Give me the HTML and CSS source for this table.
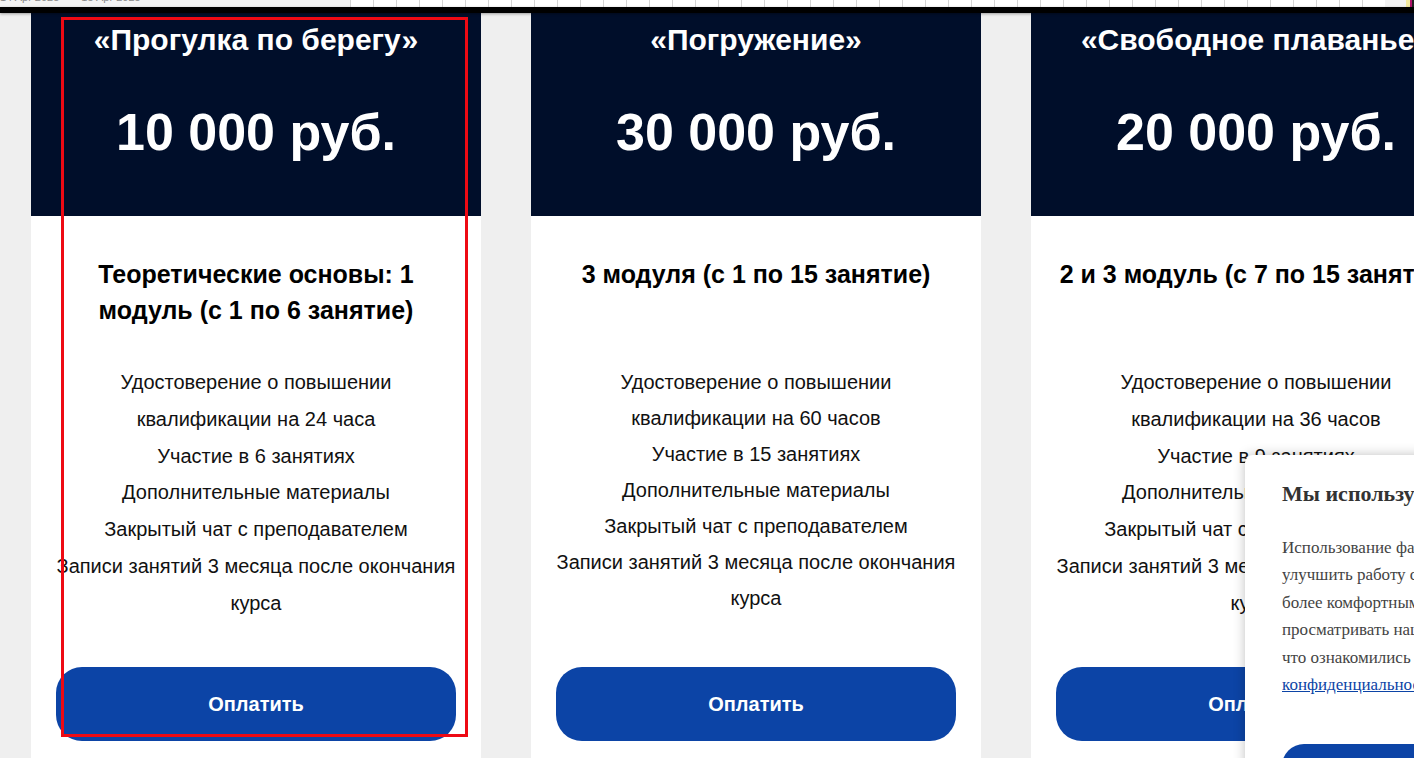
FILE: index.html
```html
<!DOCTYPE html>
<html lang="ru">
<head>
<meta charset="utf-8">
<title>Тарифы</title>
<link rel="stylesheet" href="styles.css">
</head>
<body>
<div class="topstrip">
  <div class="dates"><span>14 Apr 2025</span><span>15 Apr 2025</span></div>
  <div class="ruler">
    <i></i><i></i><i></i><i></i><i></i><i></i><i></i><i></i><i></i><i></i><i></i><i></i><i></i><i></i><i></i><i></i><i></i><i></i><i></i><i></i><i></i><i></i><i></i><i></i><i></i><i></i><i></i><i></i><i></i><i></i><i></i><i></i><i></i><i></i><i></i><i></i><i></i><i></i><i></i><i></i><i></i><i></i><i></i><i></i><i></i>
  </div>
  <div class="mark"></div>
</div>
<div class="blackbar"></div>

<main class="cards">
  <section class="card">
    <div class="card-head">
      <h2 class="title">«Прогулка по берегу»</h2>
      <div class="price">10 000 руб.</div>
    </div>
    <div class="card-body">
      <h3 class="sub">Теоретические основы: 1 модуль (с 1 по 6 занятие)</h3>
      <div class="features">
        <p>Удостоверение о повышении квалификации на 24 часа</p>
        <p>Участие в 6 занятиях</p>
        <p>Дополнительные материалы</p>
        <p>Закрытый чат с преподавателем</p>
        <p>Записи занятий 3 месяца после окончания курса</p>
      </div>
      <button class="btn">Оплатить</button>
    </div>
  </section>

  <section class="card">
    <div class="card-head">
      <h2 class="title">«Погружение»</h2>
      <div class="price">30 000 руб.</div>
    </div>
    <div class="card-body">
      <h3 class="sub">3 модуля (с 1 по 15 занятие)</h3>
      <div class="features tight">
        <p>Удостоверение о повышении квалификации на 60 часов</p>
        <p>Участие в 15 занятиях</p>
        <p>Дополнительные материалы</p>
        <p>Закрытый чат с преподавателем</p>
        <p>Записи занятий 3 месяца после окончания курса</p>
      </div>
      <button class="btn">Оплатить</button>
    </div>
  </section>

  <section class="card">
    <div class="card-head">
      <h2 class="title">«Свободное плаванье»</h2>
      <div class="price">20 000 руб.</div>
    </div>
    <div class="card-body">
      <h3 class="sub nowrap">2 и 3 модуль (с 7 по 15 занятие)</h3>
      <div class="features">
        <p>Удостоверение о повышении квалификации на 36 часов</p>
        <p>Участие в 9 занятиях</p>
        <p>Дополнительные материалы</p>
        <p>Закрытый чат с преподавателем</p>
        <p>Записи занятий 3 месяца после окончания курса</p>
      </div>
      <button class="btn">Оплатить</button>
    </div>
  </section>
</main>

<div class="annot"></div>

<aside class="cookie">
  <h4 class="cookie-title">Мы используем cookie</h4>
  <p class="cookie-text">Использование файлов cookie позволяет нам<br>улучшить работу сайта и сделать его<br>более комфортным. Продолжая<br>просматривать наш сайт, вы подтверждаете,<br>что ознакомились с политикой<br><a href="#">конфиденциальности</a></p>
  <button class="cookie-btn">Принять</button>
</aside>
</body>
</html>
```

FILE: styles.css
```css
* { box-sizing: border-box; }

html, body {
  margin: 0;
  padding: 0;
  overflow: hidden;
  height: 758px;
}

body {
  background: #efefef;
  font-family: "Liberation Sans", Arial, sans-serif;
  color: #111;
  position: relative;
}

.topstrip {
  height: 7px;
  background: #f3f3f3;
  display: flex;
  overflow: hidden;
}

.dates {
  width: 350px;
  display: flex;
  gap: 22px;
  font-size: 11px;
  line-height: 11px;
  color: #888;
  margin-top: -8px;
  padding-left: 0;
}

.ruler {
  flex: 1;
  display: flex;
}

.ruler i {
  display: block;
  width: 23px;
  flex: none;
  height: 7px;
  background: #fff;
  border-left: 1px solid #d4d4d4;
}

.mark {
  width: 8px;
  background: linear-gradient(90deg, #f3eaa0 0 4px, #b0126a 4px 6px, #222 6px);
}

.blackbar {
  height: 6px;
  background: #000;
  box-shadow: 0 1px 3px rgba(0,0,0,0.35);
  position: relative;
  z-index: 2;
}

.cards {
  display: flex;
  gap: 50px;
  padding-left: 31px;
  width: max-content;
}

.card {
  width: 450px;
  flex: none;
  background: #fff;
}

.card-head {
  height: 203px;
  background: #000e2a;
  color: #fff;
  text-align: center;
  padding-top: 9px;
}

.title {
  margin: 0;
  font-size: 30px;
  line-height: 36px;
  font-weight: 700;
  white-space: nowrap;
}

.price {
  margin-top: 43px;
  font-size: 52px;
  line-height: 62px;
  font-weight: 700;
}

.card-body {
  padding: 40px 25px 40px;
  text-align: center;
}

.sub {
  margin: 0 0 36px;
  height: 72px;
  font-size: 25px;
  line-height: 36px;
  font-weight: 700;
  color: #000;
}

.sub.nowrap {
  white-space: nowrap;
}

.features {
  height: 303px;
  font-size: 20px;
  line-height: 36.8px;
  color: #111;
}

.features.tight {
  line-height: 36px;
}

.features p {
  margin: 0;
}

.btn {
  display: block;
  width: 400px;
  height: 74px;
  border: 0;
  border-radius: 26px;
  background: #0c44a6;
  color: #fff;
  font-family: "Liberation Sans", Arial, sans-serif;
  font-size: 20px;
  font-weight: 700;
}

.annot {
  position: absolute;
  left: 61px;
  top: 17px;
  width: 407px;
  height: 720px;
  border: 3px solid #ee0a14;
  z-index: 3;
  pointer-events: none;
}

.cookie {
  position: absolute;
  left: 1245px;
  top: 455px;
  width: 440px;
  height: 360px;
  background: #fff;
  border-radius: 8px;
  box-shadow: 0 0 12px rgba(0,0,0,0.25);
  padding: 25px 37px;
  font-family: "Liberation Serif", "Times New Roman", serif;
  z-index: 4;
}

.cookie-title {
  margin: 0;
  font-size: 22px;
  line-height: 28px;
  font-weight: 700;
  color: #333;
  white-space: nowrap;
}

.cookie-text {
  margin: 26px 0 0;
  font-size: 17px;
  line-height: 27.4px;
  color: #444;
  white-space: nowrap;
}

.cookie-text a {
  color: #0c44a6;
  text-decoration: underline;
}

.cookie-btn {
  display: block;
  margin-top: 46px;
  width: 300px;
  height: 50px;
  border: 0;
  border-radius: 22px;
  background: #0c44a6;
  color: #fff;
}
```
